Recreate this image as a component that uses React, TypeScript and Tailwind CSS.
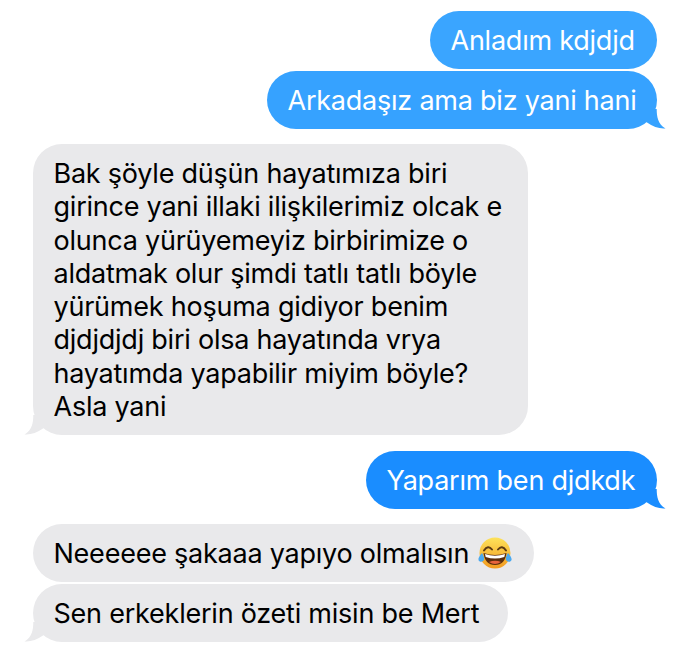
const font = "[font-family:Inter,'Noto_Sans',sans-serif]";

const TailRight = ({ color }: { color: string }) => (
  <svg className="absolute right-[-9px] bottom-0" width="24" height="20" viewBox="0 0 24 20">
    <path d="M14.7 0 C14.7 8 16 15 23.5 19.4 C18 20 11 18 5 13.6 L0 10 L0 0 Z" fill={color} />
  </svg>
);

const TailLeft = () => (
  <svg className="absolute left-[-9px] bottom-0" width="24" height="20" viewBox="0 0 24 20">
    <path d="M9.3 0 C9.3 8 8 15 0.5 19.4 C6 20 13 18 19 13.6 L24 10 L24 0 Z" fill="#e9e9eb" />
  </svg>
);

const LaughEmoji = () => (
  <svg className="absolute left-[445px] top-[13px]" width="34" height="32" viewBox="0 0 34 32">
    <defs>
      <linearGradient id="face" x1="0" y1="0" x2="0" y2="1">
        <stop offset="0" stopColor="#fde25a" />
        <stop offset="1" stopColor="#f29a1f" />
      </linearGradient>
    </defs>
    <circle cx="17" cy="16" r="15.5" fill="url(#face)" />
    <path d="M6 13.5 Q10 7.5 14 12.5" fill="none" stroke="#5b3a12" strokeWidth="2" strokeLinecap="round" />
    <path d="M20 12.5 Q24 7.5 28 13.5" fill="none" stroke="#5b3a12" strokeWidth="2" strokeLinecap="round" />
    <path d="M5.5 16 Q17 20 28.5 16 Q27 28 17 28 Q7 28 5.5 16 Z" fill="#5b2d0c" />
    <path d="M7 17 Q17 20.5 27 17 L26.3 20 Q17 23 7.7 20 Z" fill="#ffffff" />
    <path d="M11 25 Q17 22.5 23 25 Q20 27 17 27 Q14 27 11 25 Z" fill="#e8643c" />
    <path d="M4 16 C1.5 19 0 21 0.5 23 C1 25 4 25.5 5.5 23.7 C6.8 22 6 19 4 16 Z" fill="#4aa8ee" />
    <path d="M30 16 C32.5 19 34 21 33.5 23 C33 25 30 25.5 28.5 23.7 C27.2 22 28 19 30 16 Z" fill="#4aa8ee" />
  </svg>
);

const lines = [
  "Bak şöyle düşün hayatımıza biri",
  "girince yani illaki ilişkilerimiz olcak e",
  "olunca yürüyemeyiz birbirimize o",
  "aldatmak olur şimdi tatlı tatlı böyle",
  "yürümek hoşuma gidiyor benim",
  "djdjdjdj biri olsa hayatında vrya",
  "hayatımda yapabilir miyim böyle?",
  "Asla yani",
];

export default function App() {
  return (
    <div className={`${font} w-[690px] h-[649px] bg-white overflow-hidden flex flex-col px-[33px] pt-[11px] text-[27px] leading-[33.3px] tracking-[-0.23px] antialiased`}>
      <div className="self-end w-[227px] h-[58px] rounded-[29px] bg-[#3aa5ff] text-white flex items-center pl-[20.5px] pt-[2px] whitespace-nowrap">
        Anladım kdjdjd
      </div>
      <div className="relative self-end w-[390px] h-[58px] mt-[2px] rounded-[29px] bg-[#36a2ff] text-white flex items-center pl-[20.5px] pt-[2px] whitespace-nowrap">
        <TailRight color="#36a2ff" />
        <span className="relative">Arkadaşız ama biz yani hani</span>
      </div>

      <div className="relative w-[495px] h-[291px] mt-[15px] rounded-[29px] bg-[#e9e9eb] text-black pl-[20.5px] pt-[13px] whitespace-nowrap">
        <TailLeft />
        <div className="relative flex flex-col">
          {lines.map((line) => (
            <div key={line}>{line}</div>
          ))}
        </div>
      </div>

      <div className="relative self-end w-[291px] h-[58px] mt-[16px] rounded-[29px] bg-[#1a8dff] text-white flex items-center pl-[20.5px] pt-[2px] whitespace-nowrap">
        <TailRight color="#1a8dff" />
        <span className="relative">Yaparım ben djdkdk</span>
      </div>

      <div className="relative w-[501px] h-[58px] mt-[15px] rounded-[29px] bg-[#e9e9eb] text-black flex items-center pl-[20.5px] pt-[2px] whitespace-nowrap">
        Neeeeee şakaaa yapıyo olmalısın
        <LaughEmoji />
      </div>
      <div className="relative w-[475px] h-[58px] mt-[2px] rounded-[29px] bg-[#e9e9eb] text-black flex items-center pl-[20.5px] pt-[2px] whitespace-nowrap">
        <TailLeft />
        <span className="relative">Sen erkeklerin özeti misin be Mert</span>
      </div>
    </div>
  );
}
